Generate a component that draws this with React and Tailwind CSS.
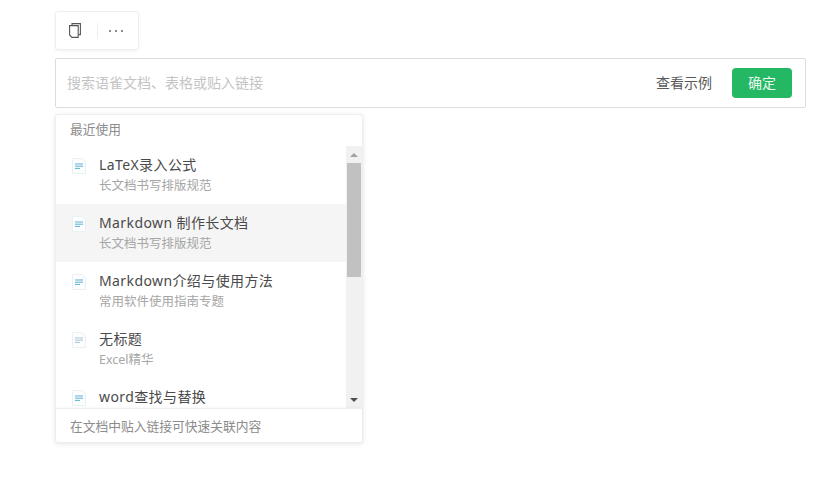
import React from "react";

const docs = [
  { title: "LaTeX录入公式", sub: "长文档书写排版规范", color: "#5fb0cf" },
  { title: "Markdown 制作长文档", sub: "长文档书写排版规范", color: "#5fb0cf", active: true },
  { title: "Markdown介绍与使用方法", sub: "常用软件使用指南专题", color: "#5fb0cf" },
  { title: "无标题", sub: "Excel精华", color: "#a5c6cf" },
  { title: "word查找与替换", color: "#5fb0cf" },
];

const DocIcon = ({ color }) => (
  <svg width="16" height="18" viewBox="0 0 16 18" fill="none" className="shrink-0">
    <path d="M1.5 1.5h9.5l3.5 3.5v11.5h-13z" fill="#fbfdfe" stroke="#e8f1f4" />
    <path d="M4 7h8M4 9.2h8M4 11.4h5" stroke={color} strokeWidth="1" />
  </svg>
);

const CopyIcon = () => (
  <svg width="12" height="15" viewBox="0 0 12 15" fill="none" stroke="#555" strokeWidth="1.1">
    <path d="M3 2V.6h8.4v11H9.6" />
    <path d="M.6 2.6h8.6v11.8H3L.6 12z" />
  </svg>
);

const App = () => {
  return (
    <div className="w-[835px] h-[482px] bg-white pl-[55px] pt-[11px] overflow-hidden font-['Noto_Sans','Noto_Sans_CJK_SC',sans-serif]">
      <div className="w-[84px] h-[39px] flex items-center border border-[#eeeeee] rounded-[3px] shadow-[0_1px_3px_rgba(0,0,0,0.06)]">
        <div className="w-[41px] pl-[13px] flex">
          <CopyIcon />
        </div>
        <div className="w-px h-[16px] bg-[#eeeeee]"></div>
        <div className="ml-[11px] flex gap-[4px]">
          <span className="w-[2px] h-[2px] rounded-full bg-[#666]"></span>
          <span className="w-[2px] h-[2px] rounded-full bg-[#666]"></span>
          <span className="w-[2px] h-[2px] rounded-full bg-[#666]"></span>
        </div>
      </div>

      <div className="relative mt-[8px] w-[751px]">
        <div className="h-[50px] flex items-center border border-[#dddddd] rounded-[2px] pl-[11px] pr-[13px]">
          <span className="flex-1 pb-[2px] text-[14px] text-[#c4c4c4]">搜索语雀文档、表格或贴入链接</span>
          <span className="pb-[2px] text-[14px] text-[#595959]">查看示例</span>
          <button className="ml-[20px] w-[60px] h-[30px] pb-[2px] rounded-[4px] bg-[#25b864] text-[#eaf8f0] text-[14px]">确定</button>
        </div>

        <div className="absolute left-0 top-[56px] w-[308px] h-[329px] flex flex-col bg-white border border-[#eeeeee] rounded-[3px] shadow-[0_1px_5px_rgba(0,0,0,0.1)] z-10">
          <div className="h-[31px] shrink-0 pl-[14px] pt-[5px] text-[12.75px] leading-[18px] text-[#8c8c8c]">最近使用</div>
          <div className="flex flex-1 min-h-0">
            <div className="flex-1 overflow-hidden">
              {docs.map((d) => (
                <div key={d.title} className={`h-[58px] flex pl-[15px] pt-[8px] ${d.active ? "bg-[#f5f5f5]" : ""}`}>
                  <div className="mt-[3px]">
                    <DocIcon color={d.color} />
                  </div>
                  <div className="ml-[12px]">
                    <div className="text-[14px] leading-[22px] tracking-[0.4px] text-[#4a4a4a]">{d.title}</div>
                    {d.sub && <div className="mt-px text-[12.5px] leading-[18px] text-[#a6a6a6]">{d.sub}</div>}
                  </div>
                </div>
              ))}
            </div>
            <div className="w-[16px] shrink-0 flex flex-col bg-[#f1f1f1]">
              <div className="h-[17px] flex items-center justify-center">
                <span className="w-0 h-0 border-x-[4px] border-x-transparent border-b-[4px] border-b-[#a3a3a3]"></span>
              </div>
              <div className="h-[114px] mx-px bg-[#c1c1c1]"></div>
              <div className="flex-1"></div>
              <div className="h-[17px] flex items-center justify-center">
                <span className="w-0 h-0 border-x-[4px] border-x-transparent border-t-[4px] border-t-[#505050]"></span>
              </div>
            </div>
          </div>
          <div className="h-[34px] shrink-0 flex items-center pl-[14px] pt-[2px] border-t border-[#eeeeee] shadow-[0_-1px_2px_rgba(0,0,0,0.03)] text-[12.75px] text-[#8c8c8c]">
            在文档中贴入链接可快速关联内容
          </div>
        </div>
      </div>
    </div>
  );
};

export default App;
